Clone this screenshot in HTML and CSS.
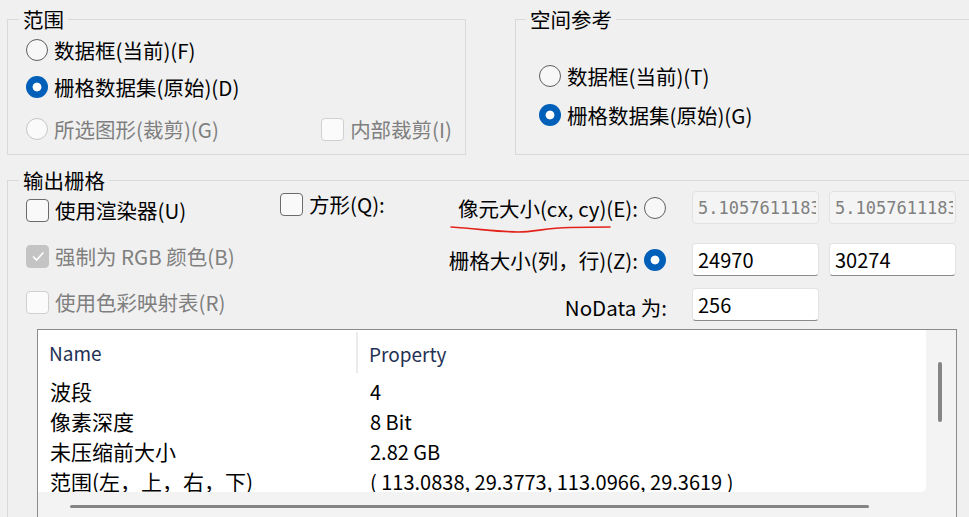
FILE: index.html
```html
<!DOCTYPE html>
<html lang="zh-CN">
<head>
  <meta charset="UTF-8" />
  <meta name="viewport" content="width=device-width, initial-scale=1.0"/>
  <title>输出栅格</title>
  <link rel="stylesheet" href="styles.css">
</head>
<body>

  <div class="dialog">
    <div class="top-row">
      <fieldset class="group extent">
        <legend>范围</legend>
        <label class="opt"><span class="radio"></span>数据框(当前)(F)</label>
        <label class="opt"><span class="radio on"></span>栅格数据集(原始)(D)</label>
        <div class="opt-row">
          <label class="opt off"><span class="radio"></span>所选图形(裁剪)(G)</label>
          <label class="opt off"><span class="check"></span>内部裁剪(I)</label>
        </div>
      </fieldset>

      <fieldset class="group spatial">
        <legend>空间参考</legend>
        <label class="opt"><span class="radio"></span>数据框(当前)(T)</label>
        <label class="opt"><span class="radio on"></span>栅格数据集(原始)(G)</label>
      </fieldset>
    </div>

    <fieldset class="group output">
      <legend>输出栅格</legend>
      <div class="output-top">
        <div class="checks">
          <label class="opt"><span class="check"></span>使用渲染器(U)</label>
          <label class="opt off">
            <span class="check on">
              <svg width="20" height="20" viewBox="0 0 20 20"><path d="M5 10.5l3.5 3.5 7-7.5" fill="none" stroke="#fff" stroke-width="1.6"/></svg>
            </span>强制为 RGB 颜色(B)
          </label>
          <label class="opt off"><span class="check"></span>使用色彩映射表(R)</label>
        </div>

        <div class="size-grid">
          <label class="opt square"><span class="check"></span>方形(Q):</label>
          <span class="field-label">像元大小(cx, cy)(E):
            <svg class="scribble" width="162" height="10" viewBox="0 0 162 10"><path d="M1 3C30 5 50 8 68 8C85 8 95 4 120 3.5L160 3" fill="none" stroke="#e3231b" stroke-width="1.6" stroke-linecap="round"/></svg>
          </span>
          <span class="radio-cell"><span class="radio"></span></span>
          <input class="num" value="5.1057611183" disabled>
          <input class="num" value="5.1057611183" disabled>

          <span></span>
          <span class="field-label">栅格大小(列，行)(Z):</span>
          <span class="radio-cell"><span class="radio on"></span></span>
          <input class="num" value="24970">
          <input class="num" value="30274">

          <span></span>
          <span class="field-label nodata">NoData 为:</span>
          <input class="num" value="256">
        </div>
      </div>

      <div class="list">
        <div class="list-body">
          <div class="list-head"><span class="col-name">Name</span><span>Property</span></div>
          <div class="list-row"><span>波段</span><span class="val">4</span></div>
          <div class="list-row"><span>像素深度</span><span class="val">8 Bit</span></div>
          <div class="list-row"><span>未压缩前大小</span><span class="val">2.82 GB</span></div>
          <div class="list-row"><span>范围(左，上，右，下)</span><span class="val">( 113.0838, 29.3773, 113.0966, 29.3619 )</span></div>
        </div>
        <div class="vbar"><span class="thumb"></span></div>
        <div class="hbar"><span class="thumb"></span></div>
      </div>
    </fieldset>
  </div>

</body>
</html>
```

FILE: styles.css
```css
* {
  box-sizing: border-box;
}

html, body {
  margin: 0;
  height: 100%;
  overflow: hidden;
}

body {
  background: #f0f0f0;
  font-family: "Noto Sans CJK SC", "Noto Sans", sans-serif;
  font-size: 20.5px;
  color: #000;
}

.dialog {
  width: 1010px;
  padding: 7px 0 0 7px;
}

.top-row {
  display: flex;
  gap: 49px;
}

/* group boxes */
.group {
  margin: 0;
  min-width: 0;
  border: 1px solid #d9d9d9;
  padding: 2px 13px 8px 18px;
  display: flex;
  flex-direction: column;
}

.group legend {
  margin-left: -7px;
  padding: 0 4px;
  line-height: 24px;
}

.extent {
  width: 459px;
  gap: 3px;
}

.extent .opt-row {
  display: flex;
  justify-content: space-between;
  margin-top: 5px;
}

.spatial {
  flex: 1;
  padding: 28px 0 0 23px;
  gap: 5px;
}

.spatial legend {
  margin-left: -13px;
}

.output {
  margin-top: 13px;
  padding: 0 0 0 18px;
}

/* radios and checkboxes */
.opt {
  display: flex;
  align-items: center;
  gap: 6px;
  height: 34px;
  white-space: nowrap;
}

.opt.off {
  color: #7f7f7f;
}

.radio {
  flex: none;
  width: 22px;
  height: 22px;
  border-radius: 50%;
  border: 1px solid #5f5f5f;
  background: #f7f7f7;
}

.radio.on {
  border: none;
  background: radial-gradient(circle, #fff 0 4px, #005fb8 4.8px);
}

.off .radio {
  border-color: #c6c6c6;
  background: #fafafa;
}

.check {
  flex: none;
  width: 23px;
  height: 23px;
  border-radius: 4px;
  border: 1px solid #6b6b6b;
  background: #f9f9f9;
  display: flex;
  align-items: center;
  justify-content: center;
}

.off .check {
  border-color: #d0d0d0;
  background: #fbfbfb;
}

.off .check.on {
  border-color: #c4c4c4;
  background: #c4c4c4;
}

/* output raster options */
.output-top {
  display: flex;
  align-items: flex-start;
}

.checks {
  flex: none;
  width: 254px;
  padding-top: 1px;
  display: flex;
  flex-direction: column;
  gap: 12px;
}

.size-grid {
  margin-top: -1px;
  display: grid;
  grid-template-columns: 164px 194px 54px 137px 127px;
  grid-template-rows: 52px 45px 35px;
  align-items: start;
}

.square {
  height: 26px;
}

.field-label {
  justify-self: end;
  height: 34px;
  display: flex;
  align-items: center;
  position: relative;
  white-space: nowrap;
}

.field-label.nodata {
  grid-column: 2 / 4;
  padding-right: 25px;
  height: 38px;
}

.scribble {
  position: absolute;
  right: 26px;
  top: 33px;
}

.radio-cell {
  height: 34px;
  padding-left: 6px;
  display: flex;
  align-items: center;
}

.num {
  width: 127px;
  height: 33px;
  margin: 0;
  padding: 0 5px;
  border: 1px solid #e3e3e3;
  border-bottom-color: #8a8a8a;
  border-radius: 4px;
  background: #fff;
  font-family: "Noto Sans CJK SC", "Noto Sans", sans-serif;
  font-size: 20px;
  color: #000;
  outline: none;
}

.num:disabled {
  padding: 0 2px 0 5px;
  background: #f4f4f4;
  border-color: #e2e2e2;
  color: #808080;
  font-family: "DejaVu Sans Mono", monospace;
  font-size: 17px;
}

/* property list */
.list {
  margin: 6px 0 0 11px;
  width: 920px;
  border: 1px solid #8b8b8b;
  display: grid;
  grid-template-columns: 888px 30px;
  grid-template-rows: 162px 40px;
  background: #f3f3f3;
}

.list-body {
  background: #fff;
  border-bottom-right-radius: 5px;
  overflow: hidden;
}

.list-head {
  display: grid;
  grid-template-columns: 320px 1fr;
  height: 46px;
  align-items: center;
  color: #1f3155;
  font-size: 19px;
}

.list-head span {
  padding-left: 11px;
}

.list-head .col-name {
  align-self: start;
  margin-top: 2px;
  height: 41px;
  display: flex;
  align-items: center;
  border-right: 2px solid #ebebeb;
}

.list-row {
  display: grid;
  grid-template-columns: 320px 1fr;
  height: 30px;
  align-items: center;
  white-space: nowrap;
  font-size: 21px;
}

.list-row span {
  padding-left: 12px;
}

.list-row .val {
  font-size: 20px;
}

.vbar {
  padding: 32px 0 0 12px;
}

.vbar .thumb {
  display: block;
  width: 4px;
  height: 60px;
  border-radius: 2px;
  background: #858585;
}

.hbar {
  grid-column: 1 / -1;
  padding: 13px 0 0 32px;
}

.hbar .thumb {
  display: block;
  width: 799px;
  height: 3px;
  border-radius: 2px;
  background: #858585;
}
```
